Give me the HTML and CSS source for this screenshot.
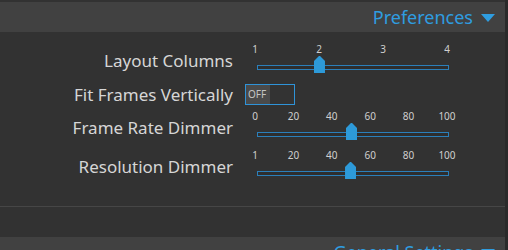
FILE: index.html
```html
<!DOCTYPE html>
<html lang="en">

<head>
    <meta charset="UTF-8">
    <meta name="viewport" content="width=device-width, initial-scale=1.0">
    <title>Preferences</title>
    <link rel="stylesheet" href="styles.css">
</head>

<body>
    <div class="main">
        <div class="section-head">
            <span>Preferences</span>
            <span class="caret"></span>
        </div>

        <div class="row row-first">
            <label class="label">Layout Columns</label>
            <div class="slider">
                <div class="ticks">
                    <span>1</span><span>2</span><span>3</span><span>4</span>
                </div>
                <div class="track-area">
                    <div class="track"></div>
                    <div class="thumb" style="left: 33.33%"></div>
                </div>
            </div>
        </div>

        <div class="row row-toggle">
            <label class="label">Fit Frames Vertically</label>
            <div class="toggle">
                <span class="toggle-off">OFF</span>
            </div>
        </div>

        <div class="row row-rate">
            <label class="label">Frame Rate Dimmer</label>
            <div class="slider">
                <div class="ticks">
                    <span>0</span><span>20</span><span>40</span><span>60</span><span>80</span><span>100</span>
                </div>
                <div class="track-area">
                    <div class="track"></div>
                    <div class="thumb" style="left: 50%"></div>
                </div>
            </div>
        </div>

        <div class="row row-res">
            <label class="label">Resolution Dimmer</label>
            <div class="slider">
                <div class="ticks">
                    <span>1</span><span>20</span><span>40</span><span>60</span><span>80</span><span>100</span>
                </div>
                <div class="track-area">
                    <div class="track"></div>
                    <div class="thumb" style="left: 49.5%"></div>
                </div>
            </div>
        </div>

        <div class="divider"></div>

        <div class="section-head section-next">
            <span>General Settings</span>
            <span class="caret"></span>
        </div>
    </div>
    <div class="scrollbar"></div>
</body>

</html>
```

FILE: styles.css
```css
* {
    box-sizing: border-box;
    margin: 0;
    padding: 0;
}

body {
    display: flex;
    height: 250px;
    overflow: hidden;
    background: #323232;
    font-family: "Noto Sans", "Open Sans", sans-serif;
    color: #d6d6d6;
}

.main {
    flex: 1;
    padding-top: 2px;
    background: #323232;
}

.scrollbar {
    width: 3px;
    background: #2a2a2a;
}

.section-head {
    height: 30px;
    background: #414141;
    display: flex;
    justify-content: flex-end;
    align-items: center;
    gap: 8px;
    padding-right: 10px;
    color: #2f9de0;
    font-size: 18px;
}

.caret {
    width: 0;
    height: 0;
    border-left: 7px solid transparent;
    border-right: 7px solid transparent;
    border-top: 8px solid #2f9de0;
    margin-top: 2px;
}

.row {
    display: grid;
    grid-template-columns: 233px 1fr;
    column-gap: 12px;
    align-items: end;
}

.row-first {
    margin-top: 10px;
}

.row-toggle {
    margin-top: 10px;
    align-items: center;
}

.row-rate {
    margin-top: 4px;
}

.row-res {
    margin-top: 7px;
}

.label {
    text-align: right;
    font-size: 17px;
    line-height: 20px;
    margin-bottom: 3px;
    white-space: nowrap;
}

.row-toggle .label {
    margin-bottom: 0;
}

.slider {
    width: 194px;
    margin-left: 10px;
    height: 32px;
}

.ticks {
    height: 14px;
    width: 192px;
    display: flex;
    justify-content: space-between;
    font-size: 10px;
    line-height: 14px;
    color: #cfcfcf;
}

.ticks span {
    width: 0;
    display: flex;
    justify-content: center;
}

.track-area {
    position: relative;
    height: 18px;
    width: 192px;
}

.track {
    position: absolute;
    top: 9px;
    left: 2px;
    width: 192px;
    height: 5px;
    border: 1px solid #2b7fba;
    background: #2e2e2e;
}

.thumb {
    position: absolute;
    top: 0;
    width: 11px;
    height: 17px;
    margin-left: -5px;
    background: #2d9ad9;
    clip-path: polygon(45% 0, 55% 0, 100% 30%, 100% 100%, 0 100%, 0 30%);
}

.toggle {
    width: 50px;
    height: 21px;
    border: 1px solid #2f93d8;
    background: #333;
    display: flex;
}

.toggle-off {
    width: 24px;
    background: #4a4a4a;
    font-size: 10px;
    line-height: 19px;
    padding-left: 2px;
    color: #c4c4c4;
}

.divider {
    height: 1px;
    margin-top: 26px;
    background: #464646;
}

.section-next {
    margin-top: 30px;
}
```
